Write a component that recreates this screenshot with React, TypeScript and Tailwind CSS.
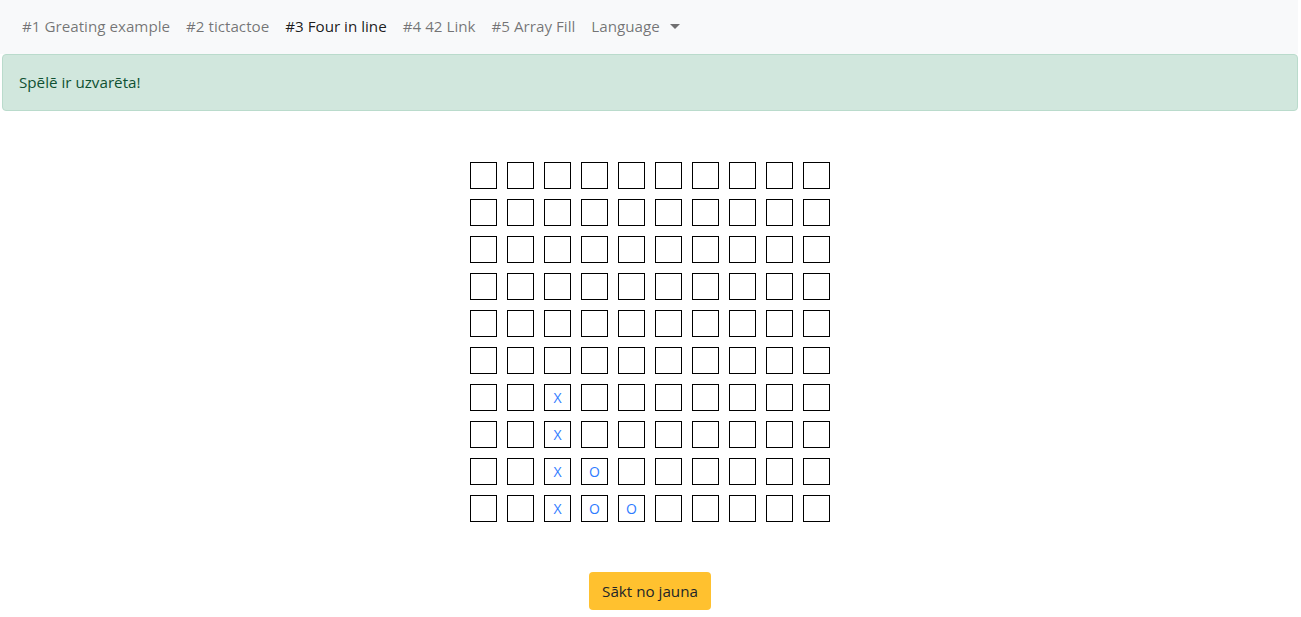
import React from "react";

const navLinks = [
  { label: "#1 Greating example", active: false },
  { label: "#2 tictactoe", active: false },
  { label: "#3 Four in line", active: true },
  { label: "#4 42 Link", active: false },
  { label: "#5 Array Fill", active: false },
];

// board[row][col]
const marks: Record<string, string> = {
  "6-2": "X",
  "7-2": "X",
  "8-2": "X",
  "9-2": "X",
  "8-3": "O",
  "9-3": "O",
  "9-4": "O",
};

export default function App() {
  const rows = Array.from({ length: 10 }, (_, r) => r);
  const cols = Array.from({ length: 10 }, (_, c) => c);

  return (
    <div
      className="w-[1298px] min-h-[617px] bg-white text-[#212529] text-base"
      style={{ fontFamily: '"Open Sans", "Noto Sans", sans-serif' }}
    >
      {/* Navbar */}
      <nav className="flex items-center h-[54px] pb-[2px] bg-[#f8f9fa] px-[14px]">
        {navLinks.map((l) => (
          <a
            key={l.label}
            className={
              "px-2 text-[15.2px] cursor-pointer " +
              (l.active ? "text-black/90" : "text-black/55")
            }
          >
            {l.label}
          </a>
        ))}
        <a className="flex items-center px-2 text-[15.2px] text-black/55 cursor-pointer">
          Language
          <span className="ml-[10px] mt-[1px] border-x-[5px] border-x-transparent border-t-[5px] border-t-black/55" />
        </a>
      </nav>

      {/* Alert */}
      <div className="ml-[2px] flex items-center h-[57px] px-4 bg-[#d1e7dd] border border-[#badbcc] rounded text-[#0f5132] text-[15.2px]">
        Spēlē ir uzvarēta!
      </div>

      {/* Board */}
      <div className="flex justify-center pt-[51px] pl-[2px]">
        <div className="grid grid-cols-10 gap-[10px]">
          {rows.map((r) =>
            cols.map((c) => (
              <div
                key={`${r}-${c}`}
                className="w-[27px] h-[27px] border border-black flex items-center justify-center text-[14px] text-[#2f7bff] leading-none"
              >
                {marks[`${r}-${c}`] ?? ""}
              </div>
            ))
          )}
        </div>
      </div>

      {/* Restart */}
      <div className="flex justify-center pt-[50px] pl-[2px]">
        <button className="h-[38px] w-[122px] bg-[#ffc12f] rounded text-[#212529] text-[15.2px]">
          Sākt no jauna
        </button>
      </div>
    </div>
  );
}
